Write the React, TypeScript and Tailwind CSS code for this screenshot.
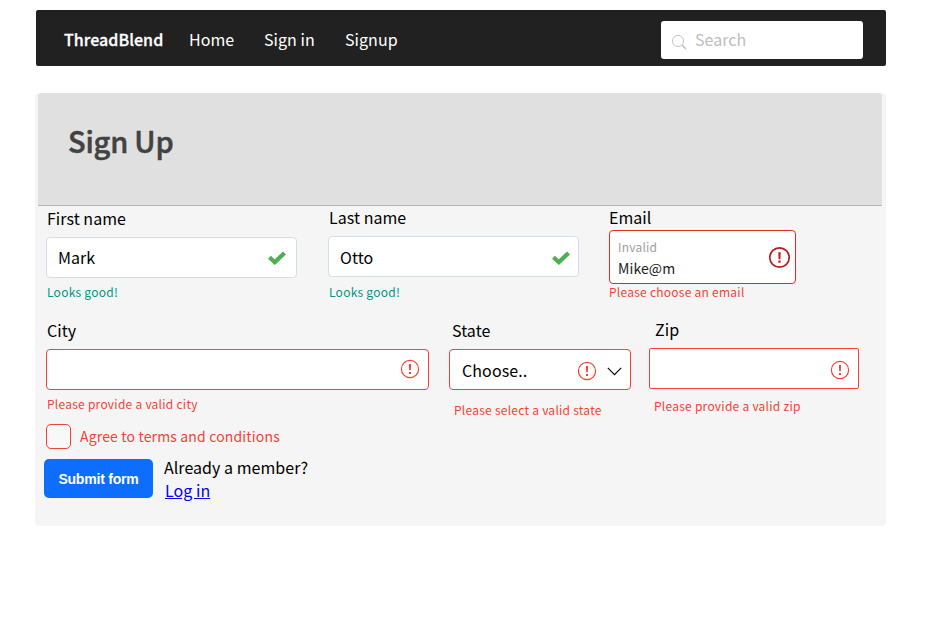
import React from "react";

function Check() {
  return (
    <svg className="h-[14px] w-[18px] shrink-0" viewBox="0 0 18 14">
      <path d="M1.5 6.3 L6.8 11.2 L16.5 1.9" fill="none" stroke="#4caf50" strokeWidth="4.2" />
    </svg>
  );
}

function Alert({ className, color, mark }: { className: string; color: string; mark: string }) {
  return (
    <svg className={className} viewBox="0 0 20 20">
      <circle cx="10" cy="10" r="8.6" fill="none" stroke={color} strokeWidth="1.2" />
      <path d="M8.9 5h2.2l-.3 6.2H9.2zM9 13h2v2H9z" fill={mark} />
    </svg>
  );
}

function Help({ className, children }: { className: string; children: React.ReactNode }) {
  return <p className={`text-[12px] leading-[18px] whitespace-nowrap tracking-[0.25px] ${className}`}>{children}</p>;
}

export default function App() {
  return (
    <div className="h-[626px] w-[951px] overflow-hidden bg-white pt-[10px] font-['Noto_Sans_CJK_SC',sans-serif] text-[16px] leading-6 tracking-[0.04px] text-black">
      <nav className="ml-[36px] flex h-[56px] w-[850px] items-center rounded-[2px] bg-[#212121] pr-[23px] pl-[28px] text-white">
        <span className="w-[125px] pt-px font-medium tracking-[0.05px] [-webkit-text-stroke:0.3px_#ffffff]">ThreadBlend</span>
        <span className="w-[75px] pt-px">Home</span>
        <span className="w-[81px] pt-px">Sign in</span>
        <span className="pt-px">Signup</span>
        <div className="mt-[4px] ml-auto flex h-[38px] w-[202px] items-center rounded-[3px] bg-white pl-[10px] text-[#bdbdbd]">
          <svg className="mt-[4px] mr-[8px] h-[16px] w-[16px]" viewBox="0 0 16 16" fill="none" stroke="#bdbdbd">
            <circle cx="7" cy="7" r="5.6" strokeWidth="0.9" />
            <path d="M11 11l4 4" strokeWidth="1.5" />
          </svg>
          <span className="pb-[2px]">Search</span>
        </div>
      </nav>

      <main className="mt-[27px] ml-[35px] h-[433px] w-[851px] rounded-[4px] bg-[#f5f5f5]">
        <header className="mr-[4px] ml-[3px] h-[113px] rounded-t-[4px] border-b border-[#b4b4b4] bg-[#e0e0e0] pt-[26px] pl-[30px]">
          <h1 className="text-[29px] leading-[42px] font-medium tracking-[-0.2px] text-[#424242] [-webkit-text-stroke:0.5px_#424242]">Sign Up</h1>
        </header>

        <section className="-mt-px flex h-[112px] pl-[11px]">
          <div className="w-[282px] pt-px">
            <label className="block pl-px">First name</label>
            <div className="mt-[7px] flex h-[41px] w-[251px] items-center justify-between rounded-[4px] border border-[#d3dfe8] bg-white pr-[10px] pl-[11px]">
              <span className="pb-[2px]">Mark</span>
              <Check />
            </div>
            <Help className="mt-[5px] pl-px text-[#009688]">Looks good!</Help>
          </div>
          <div className="w-[281px]">
            <label className="block pl-px">Last name</label>
            <div className="mt-[7px] flex h-[41px] w-[251px] items-center justify-between rounded-[4px] border border-[#d3dfe8] bg-white pt-[2px] pr-[8px] pl-[11px]">
              <span className="pb-[2px]">Otto</span>
              <Check />
            </div>
            <Help className="mt-[6px] pl-px text-[#009688]">Looks good!</Help>
          </div>
          <div>
            <label className="block">Email</label>
            <div className="mt-px flex h-[54px] w-[187px] items-center justify-between rounded-[4px] border border-[#e02b20] bg-white pr-[4px] pl-[8px]">
              <div className="pt-[1px]">
                <p className="text-[12px] leading-[20px] tracking-[0.2px] text-[#9e9e9e]">Invalid</p>
                <p className="text-[14px] leading-[22px] tracking-[0.1px] text-[#212121]">Mike@m</p>
              </div>
              <svg className="h-[23px] w-[23px]" viewBox="0 0 23 23">
                <circle cx="11.5" cy="11.5" r="9.7" fill="none" stroke="#b71c1c" strokeWidth="1.7" />
                <path d="M10.3 6.2h2.4l-.3 7h-1.8zM10.4 14.6h2.2v2.2h-2.2z" fill="#b71c1c" />
              </svg>
            </div>
            <Help className="-mt-px text-[#f44336]">Please choose an email</Help>
          </div>
        </section>

        <section className="flex h-[107px] pl-[11px]">
          <div className="w-[403px] pt-px">
            <label className="block pl-px">City</label>
            <div className="mt-[7px] flex h-[41px] w-[383px] items-center justify-end rounded-[4px] border border-[#f44336] bg-white pr-[8px] pb-px">
              <Alert className="h-[20px] w-[20px]" color="#f44336" mark="#f44336" />
            </div>
            <Help className="mt-[5px] pl-px text-[#f44336]">Please provide a valid city</Help>
          </div>
          <div className="w-[200px] pt-px">
            <label className="block pl-[3px]">State</label>
            <div className="mt-[7px] flex h-[41px] w-[182px] items-center rounded-[4px] border border-[#f44336] bg-white pt-[2px] pr-[8px] pl-[12px]">
              <span className="pb-[2px] tracking-[0.1px]">Choose..</span>
              <Alert className="ml-auto h-[20px] w-[20px]" color="#f44336" mark="#f44336" />
              <svg className="mt-px ml-[10px] h-[9px] w-[15px]" viewBox="0 0 15 9" fill="none" stroke="#000" strokeWidth="1.1">
                <path d="M.8.8l6.7 6.8L14.2.8" />
              </svg>
            </div>
            <Help className="mt-[11px] pl-[5px] text-[#f44336]">Please select a valid state</Help>
          </div>
          <div>
            <label className="block pl-[6px]">Zip</label>
            <div className="mt-[7px] flex h-[41px] w-[210px] items-center justify-end rounded-[2px] border border-[#f44336] bg-white pt-[2px] pr-[8px]">
              <Alert className="h-[20px] w-[20px]" color="#f44336" mark="#f44336" />
            </div>
            <Help className="mt-[8px] pl-[5px] text-[#f44336]">Please provide a valid zip</Help>
          </div>
        </section>

        <div className="flex h-[31px] pl-[11px]">
          <span className="h-[25px] w-[25px] rounded-[5px] border border-[#f44336] bg-[#f8f8f8]" />
          <span className="pl-[9px] text-[14px] leading-[25px] tracking-[0.16px] text-[#f44336]">Agree to terms and conditions</span>
        </div>
        <div className="flex pl-[9px]">
          <button className="mt-[4px] h-[39px] w-[109px] rounded-[5px] bg-[#0d6efd] pt-px font-['Liberation_Sans',sans-serif] text-[14px] leading-4 font-bold tracking-[-0.2px] text-white">Submit form</button>
          <div className="pl-[11px]">
            <p>Already a member?</p>
            <p className="-mt-px pl-px"><a className="text-[#0000ee] underline">Log in</a></p>
          </div>
        </div>
      </main>
    </div>
  );
}
